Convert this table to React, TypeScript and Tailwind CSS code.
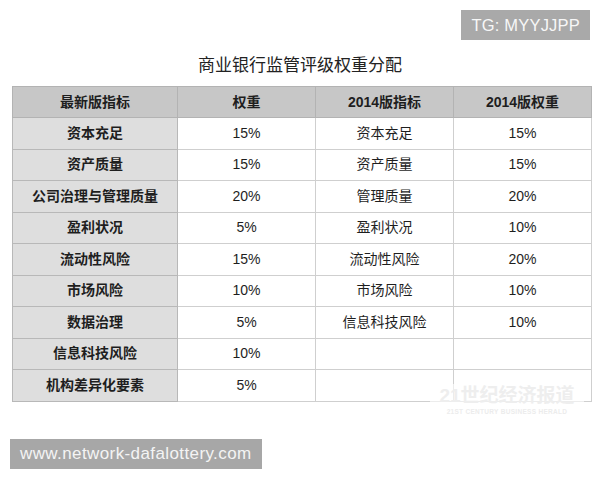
import React from 'react';

const font = { fontFamily: '"Liberation Sans", "Noto Sans CJK SC", sans-serif' };

const rows: [string, string, string, string][] = [
  ['资本充足', '15%', '资本充足', '15%'],
  ['资产质量', '15%', '资产质量', '15%'],
  ['公司治理与管理质量', '20%', '管理质量', '20%'],
  ['盈利状况', '5%', '盈利状况', '10%'],
  ['流动性风险', '15%', '流动性风险', '20%'],
  ['市场风险', '10%', '市场风险', '10%'],
  ['数据治理', '5%', '信息科技风险', '10%'],
  ['信息科技风险', '10%', '', ''],
  ['机构差异化要素', '5%', '', ''],
];

export default function App() {
  return (
    <div className="relative w-[600px] h-[480px] bg-white overflow-hidden" style={font}>
      {/* top tag */}
      <div className="flex justify-end pt-[10px] pr-[10px]">
        <div className="h-[30px] px-[10px] bg-[#a9a9a9] text-[#f7f7f7] text-[16.5px] leading-[30px] tracking-[0.2px]">
          TG: MYYJJPP
        </div>
      </div>

      <h1 className="mt-[14px] h-[24px] text-center text-[17px] leading-[24px] text-[#222]">
        商业银行监管评级权重分配
      </h1>

      <table className="ml-[12px] mt-[8px] border-collapse text-[14px] text-[#1e1e1e] table-fixed">
        <colgroup>
          <col className="w-[165px]" />
          <col className="w-[138px]" />
          <col className="w-[138px]" />
          <col className="w-[138px]" />
        </colgroup>
        <thead>
          <tr className="h-[31px] bg-[#c7c7c7]">
            {['最新版指标', '权重', '2014版指标', '2014版权重'].map((h) => (
              <th key={h} className="border border-[#b3b3b3] font-bold text-center p-0">
                {h}
              </th>
            ))}
          </tr>
        </thead>
        <tbody>
          {rows.map((r, i) => (
            <tr key={i} className="h-[31.5px]">
              <td className="border border-[#b8b8b8] bg-[#dedede] font-bold text-center p-0">{r[0]}</td>
              <td className="border border-[#cfcfcf] text-center p-0">{r[1]}</td>
              <td className="border border-[#cfcfcf] text-center p-0">{r[2]}</td>
              <td className="border border-[#cfcfcf] text-center p-0">{r[3]}</td>
            </tr>
          ))}
        </tbody>
      </table>

      {/* faint watermark over the table corner */}
      <div className="absolute left-[430px] top-[384px] w-[154px] text-center whitespace-nowrap pointer-events-none">
        <div className="text-[19px] leading-[24px] font-bold text-[#eeeeee] bg-white/60">21世纪经济报道</div>
        <div className="text-[6.5px] leading-[8px] font-bold text-[#ececec] tracking-[0.3px]">21ST CENTURY BUSINESS HERALD</div>
      </div>

      <div className="ml-[10px] mt-[37px] inline-block h-[30px] px-[10px] bg-[#a7a7a7] text-[#f4f4f4] text-[17px] leading-[30px] tracking-[0.4px]">
        www.network-dafalottery.com
      </div>
    </div>
  );
}
